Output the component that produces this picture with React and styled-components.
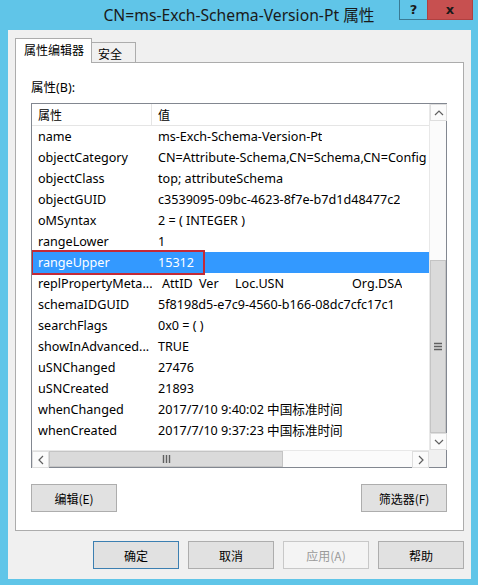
import styled, { createGlobalStyle } from "styled-components";

const GlobalStyle = createGlobalStyle`
  html, body { margin: 0; padding: 0; background: #60c5e8; }
  body { font-family: "Noto Sans", "Noto Sans CJK SC", sans-serif; }
`;

const rows = [
  ["name", "ms-Exch-Schema-Version-Pt"],
  ["objectCategory", "CN=Attribute-Schema,CN=Schema,CN=Config"],
  ["objectClass", "top; attributeSchema"],
  ["objectGUID", "c3539095-09bc-4623-8f7e-b7d1d48477c2"],
  ["oMSyntax", "2 = ( INTEGER )"],
  ["rangeLower", "1"],
  ["rangeUpper", "15312", true],
  ["replPropertyMeta...", "repl"],
  ["schemaIDGUID", "5f8198d5-e7c9-4560-b166-08dc7cfc17c1"],
  ["searchFlags", "0x0 = ( )"],
  ["showInAdvanced...", "TRUE"],
  ["uSNChanged", "27476"],
  ["uSNCreated", "21893"],
  ["whenChanged", "2017/7/10 9:40:02 中国标准时间"],
  ["whenCreated", "2017/7/10 9:37:23 中国标准时间"],
];

const Chevron = ({ dir }) => {
  const pts = {
    up: "1,6 5,2 9,6",
    down: "1,2 5,6 9,2",
    left: "6,1 2,5 6,9",
    right: "2,1 6,5 2,9",
  }[dir];
  const vertical = dir === "up" || dir === "down";
  return (
    <svg width={vertical ? 10 : 8} height={vertical ? 8 : 10} viewBox={vertical ? "0 0 10 8" : "0 0 8 10"}>
      <polyline points={pts} fill="none" stroke="#606060" strokeWidth="1.2" />
    </svg>
  );
};

const Grip = ({ horizontal }) =>
  horizontal ? (
    <svg width="9" height="8" viewBox="0 0 9 8">
      <path d="M1.5 0v8M4.5 0v8M7.5 0v8" stroke="#606060" strokeWidth="1.4" />
    </svg>
  ) : (
    <svg width="8" height="9" viewBox="0 0 8 9">
      <path d="M0 1.5h8M0 4.5h8M0 7.5h8" stroke="#606060" strokeWidth="1.4" />
    </svg>
  );

const App = () => {
  return (
    <Window>
      <GlobalStyle />
      <TitleBar>
        <span />
        <Title>CN=ms-Exch-Schema-Version-Pt 属性</Title>
        <CaptionButtons>
          <CaptionButton>?</CaptionButton>
          <CaptionButton $close>x</CaptionButton>
        </CaptionButtons>
      </TitleBar>
      <Client>
        <TabStrip>
          <Tab $active>属性编辑器</Tab>
          <Tab>安全</Tab>
        </TabStrip>
        <Panel>
          <FieldLabel>属性(B):</FieldLabel>
          <ListBox>
            <ListMain>
              <HeaderRow>
                <HeaderCell $first>属性</HeaderCell>
                <HeaderCell>值</HeaderCell>
              </HeaderRow>
              {rows.map(([attr, value, selected]) => (
                <Row key={attr} $selected={selected}>
                  <NameCell>{attr}</NameCell>
                  {value === "repl" ? (
                    <ValueCell>
                      <MetaCol $w={41} $pad={4}>AttID</MetaCol>
                      <MetaCol $w={36}>Ver</MetaCol>
                      <MetaCol $w={117}>Loc.USN</MetaCol>
                      <MetaCol>Org.DSA</MetaCol>
                    </ValueCell>
                  ) : (
                    <ValueCell>{value}</ValueCell>
                  )}
                  {selected && <Highlight />}
                </Row>
              ))}
            </ListMain>
            <VScroll>
              <ScrollButton>
                <Chevron dir="up" />
              </ScrollButton>
              <Track style={{ height: 139 }} />
              <Thumb $vertical>
                <Grip />
              </Thumb>
              <ScrollButton>
                <Chevron dir="down" />
              </ScrollButton>
            </VScroll>
            <HScroll>
              <ScrollButton>
                <Chevron dir="left" />
              </ScrollButton>
              <Thumb style={{ width: 234 }}>
                <Grip horizontal />
              </Thumb>
              <Track style={{ flex: 1 }} />
              <ScrollButton>
                <Chevron dir="right" />
              </ScrollButton>
            </HScroll>
            <Corner />
          </ListBox>
          <PanelButtons>
            <Button>编辑(E)</Button>
            <Button>筛选器(F)</Button>
          </PanelButtons>
        </Panel>
        <Footer>
          <Button $default>确定</Button>
          <Button>取消</Button>
          <Button disabled>应用(A)</Button>
          <Button>帮助</Button>
        </Footer>
      </Client>
    </Window>
  );
};

const Window = styled.div`
  width: 478px;
  height: 585px;
  background: #60c5e8;
  display: flex;
  flex-direction: column;
  box-sizing: border-box;
  overflow: hidden;
`;

const TitleBar = styled.div`
  height: 30px;
  display: grid;
  grid-template-columns: 1fr auto 1fr;
  align-items: start;
`;

const Title = styled.div`
  font-family: "Noto Sans", "Noto Sans CJK SC", sans-serif;
  font-size: 15.7px;
  line-height: 30px;
  color: #1a1a1a;
  white-space: nowrap;
`;

const CaptionButtons = styled.div`
  display: flex;
  justify-content: flex-end;
  padding-right: 5px;
`;

const CaptionButton = styled.div`
  width: ${(p) => (p.$close ? "46px" : "29px")};
  height: 20px;
  box-sizing: border-box;
  display: flex;
  align-items: center;
  justify-content: center;
  font-family: "DejaVu Sans", sans-serif;
  font-weight: bold;
  font-size: 13px;
  color: #1a1a1a;
  background: ${(p) => (p.$close ? "#c75050" : "transparent")};
  border: 1px solid ${(p) => (p.$close ? "#b04040" : "#3a7a94")};
  border-top: none;
  margin-left: ${(p) => (p.$close ? "-1px" : "0")};
`;

const Client = styled.div`
  flex: 1;
  margin: 0 7px 6px 8px;
  background: #f0f0f0;
  display: flex;
  flex-direction: column;
  padding: 9px 7px 0 7px;
  box-sizing: border-box;
`;

const TabStrip = styled.div`
  display: flex;
  align-items: flex-end;
  height: 24px;
  margin-bottom: -1px;
  position: relative;
  z-index: 1;
`;

const Tab = styled.div`
  font-size: 12px;
  color: #000;
  box-sizing: border-box;
  height: ${(p) => (p.$active ? "25px" : "21px")};
  padding: ${(p) => (p.$active ? "2px 7px 0 8px" : "2px 13px 0 6px")};
  background: ${(p) => (p.$active ? "#fff" : "#f0f0f0")};
  border: 1px solid #acacac;
  border-bottom: ${(p) => (p.$active ? "none" : "1px solid #acacac")};
  border-left: ${(p) => (p.$active ? "1px solid #acacac" : "none")};
  line-height: 18px;
  font-family: "Noto Sans CJK SC", sans-serif;
`;

const Panel = styled.div`
  width: 449px;
  height: 469px;
  box-sizing: border-box;
  background: #fff;
  border: 1px solid #acacac;
  padding: 15px 15px 0 15px;
  display: flex;
  flex-direction: column;
`;

const FieldLabel = styled.div`
  font-size: 12.5px;
  line-height: 20px;
  color: #000;
  margin-bottom: 5px;
`;

const ListBox = styled.div`
  width: 416px;
  height: 365px;
  box-sizing: border-box;
  border: 1px solid #828790;
  display: grid;
  grid-template-columns: 1fr 17px;
  grid-template-rows: 1fr 17px;
  font-size: 12.6px;
  color: #000;
`;

const ListMain = styled.div`
  overflow: hidden;
`;

const HeaderRow = styled.div`
  display: flex;
  height: 22px;
  box-sizing: border-box;
  border-bottom: 1px solid #e5e5e5;
`;

const HeaderCell = styled.div`
  width: ${(p) => (p.$first ? "120px" : "auto")};
  flex: ${(p) => (p.$first ? "none" : "1")};
  box-sizing: border-box;
  padding-left: 6px;
  line-height: 21px;
  border-right: ${(p) => (p.$first ? "1px solid #e5e5e5" : "none")};
  font-family: "Noto Sans CJK SC", sans-serif;
  font-size: 12px;
`;

const Row = styled.div`
  position: relative;
  display: flex;
  height: 21px;
  line-height: 21px;
  white-space: nowrap;
  background: ${(p) => (p.$selected ? "#3399ff" : "transparent")};
  color: ${(p) => (p.$selected ? "#fff" : "#000")};
`;

const NameCell = styled.div`
  width: 120px;
  flex: none;
  padding-left: 6px;
  box-sizing: border-box;
  overflow: hidden;
`;

const ValueCell = styled.div`
  padding-left: 6px;
  display: flex;
  overflow: hidden;
`;

const MetaCol = styled.span`
  display: inline-block;
  width: ${(p) => (p.$w ? `${p.$w}px` : "auto")};
  padding-left: ${(p) => (p.$pad ? `${p.$pad}px` : "0")};
  box-sizing: border-box;
`;

const Highlight = styled.div`
  position: absolute;
  left: -1px;
  top: -2px;
  width: 174px;
  height: 25px;
  box-sizing: border-box;
  border: 2px solid #c42a37;
`;

const VScroll = styled.div`
  display: flex;
  flex-direction: column;
  background: #fbfbfb;
  border-left: 1px solid #e8e8e8;
`;

const HScroll = styled.div`
  display: flex;
  background: #fbfbfb;
  border-top: 1px solid #e8e8e8;
`;

const ScrollButton = styled.div`
  width: 17px;
  height: 17px;
  flex: none;
  box-sizing: border-box;
  display: flex;
  align-items: center;
  justify-content: center;
  background: #fbfbfb;
  border: 1px solid #dedede;
`;

const Track = styled.div`
  flex: none;
  background: #fbfbfb;
`;

const Thumb = styled.div`
  flex: ${(p) => (p.$vertical ? "1" : "none")};
  box-sizing: border-box;
  background: #dadada;
  border: 1px solid #c4c4c4;
  display: flex;
  align-items: center;
  justify-content: center;
`;

const Corner = styled.div`
  background: #f0f0f0;
`;

const PanelButtons = styled.div`
  display: flex;
  justify-content: space-between;
  width: 416px;
  margin-top: 16px;
`;

const Button = styled.button`
  width: 86px;
  height: 28px;
  box-sizing: border-box;
  font-family: "Noto Sans CJK SC", sans-serif;
  font-size: 12px;
  padding: 0;
  color: ${(p) => (p.disabled ? "#9a9a9a" : "#000")};
  background: ${(p) => (p.disabled ? "#f4f4f4" : "#e1e1e1")};
  border: 1px solid ${(p) => (p.disabled ? "#c8c8c8" : p.$default ? "#3c7fb1" : "#adadad")};
  border-radius: 0;
`;

const Footer = styled.div`
  display: flex;
  justify-content: flex-end;
  gap: 9px;
  margin-top: 10px;
`;

export default App;
